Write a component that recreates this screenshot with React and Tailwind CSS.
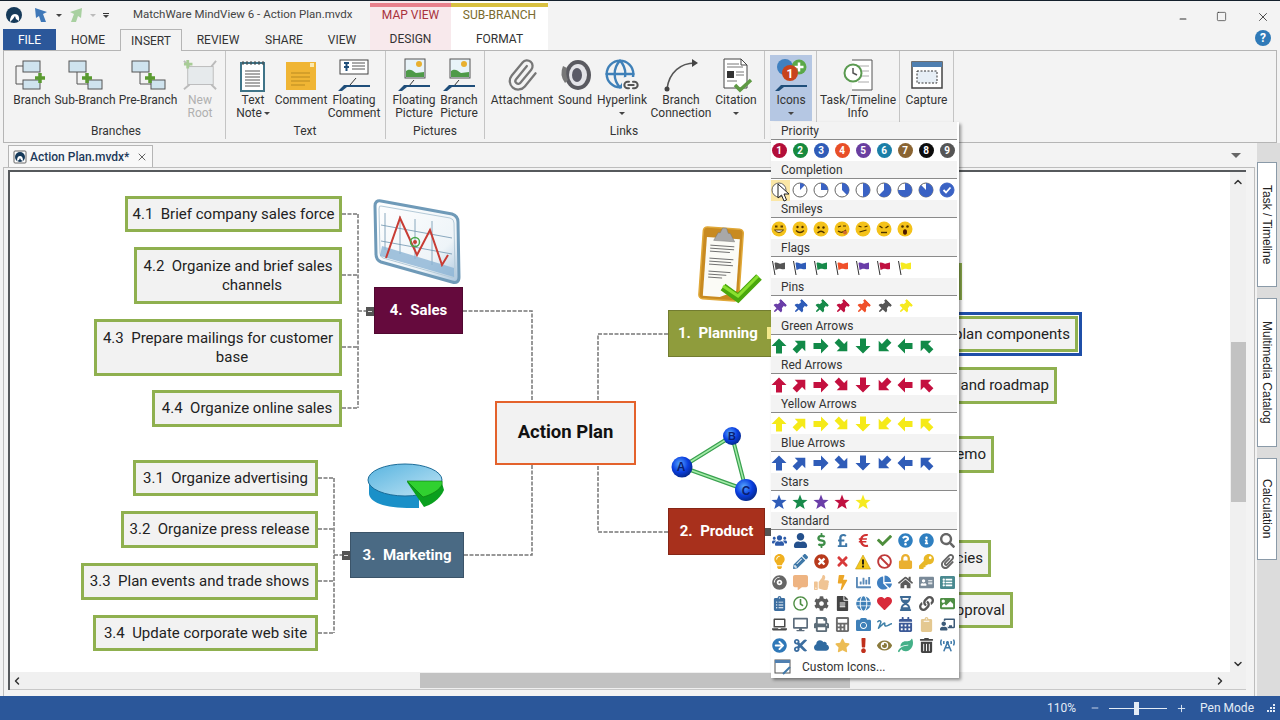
import {
  FaUsers, FaUser, FaDollarSign, FaPoundSign, FaEuroSign, FaCheck, FaQuestionCircle, FaInfoCircle, FaSearch,
  FaLightbulb, FaPencilAlt, FaTimesCircle, FaTimes, FaBan, FaLock, FaKey, FaPaperclip,
  FaCompactDisc, FaCommentAlt, FaThumbsUp, FaBolt, FaChartBar, FaChartPie, FaHome, FaAddressCard, FaListAlt,
  FaClipboardList, FaRegClock, FaCog, FaFileAlt, FaGlobe, FaHeart, FaHourglassHalf, FaLink, FaImage,
  FaLaptop, FaDesktop, FaPrint, FaCalculator, FaCamera, FaSignature, FaCalendarAlt, FaClipboard, FaChalkboardTeacher,
  FaArrowCircleRight, FaCut, FaCloud, FaStar, FaExclamation, FaEye, FaLeaf, FaTrashAlt, FaBroadcastTower, FaThumbtack,
} from "react-icons/fa";
import { ChevronLeft, ChevronRight, ChevronUp, ChevronDown, X, Minus, Plus, Paperclip, Globe, Link2, Square } from "lucide-react";

const Caret = ({ className = "" }) => (
  <span className={`inline-block shrink-0 w-0 h-0 border-l-[3px] border-r-[3px] border-t-[3px] border-l-transparent border-r-transparent border-t-[#444] ${className}`} />
);

// ribbon drawings
const Box = ({ x, y, w, h }) => <rect x={x} y={y} width={w} height={h} fill="#cfe3ee" stroke="#555" strokeWidth="1" />;
const GreenPlus = ({ x, y }) => <path d={`M${x} ${y - 5}v10M${x - 5} ${y}h10`} stroke="#5a9a30" strokeWidth="3.5" />;
const Wedge = () => <path d="M2 33 L8 27 H34 V29 H11 L6 33Z" fill="#1f4e7a" />;

const IconBranch = () => (
  <svg width="36" height="36" viewBox="0 0 36 36"><Box x="9" y="3" w="17" h="11" /><Box x="9" y="22" w="17" h="9" />
    <path d="M9 8H2V26H9" fill="none" stroke="#555" /><GreenPlus x="26" y="20" /></svg>
);
const IconSub = () => (
  <svg width="36" height="36" viewBox="0 0 36 36"><Box x="2" y="3" w="17" h="11" /><Box x="21" y="22" w="14" h="9" />
    <path d="M10 14V26H21" fill="none" stroke="#555" /><GreenPlus x="20" y="20" /></svg>
);
const IconNewRoot = () => (
  <svg width="36" height="36" viewBox="0 0 36 36"><rect x="5" y="8" width="27" height="19" fill="#e6eaec" stroke="#bbb" />
    <path d="M1 2l6 6M35 2l-5 6M1 32l6-5M35 32l-5-5" stroke="#bbb" strokeWidth="2" /><path d="M5 1v9M1 5.500h9" stroke="#a8cc96" strokeWidth="3" /></svg>
);
const IconNote = () => (
  <svg width="36" height="36" viewBox="0 0 36 36"><rect x="6" y="5" width="23" height="28" fill="#fff" stroke="#3f7488" strokeWidth="2" />
    <path d="M8 3v4M12 3v4M16 3v4M20 3v4M24 3v4M28 3v4" stroke="#444" /><path d="M10 13h15M10 16h15M10 19h15M10 22h15M10 25h15M10 28h15" stroke="#555" /></svg>
);
const IconComment = () => (
  <svg width="36" height="36" viewBox="0 0 36 36"><rect x="3" y="4" width="30" height="28" fill="#f0b534" />
    <path d="M8 15h19M8 19h19M8 23h19M8 27h14" stroke="#b98a20" /><rect x="27" y="5" width="4" height="4" fill="#fbe9b0" /></svg>
);
const IconFloatComment = () => (
  <svg width="36" height="36" viewBox="0 0 36 36"><rect x="4" y="2" width="28" height="14" fill="#fff" stroke="#444" />
    <path d="M8 5h5M10.500 5v8M8 9h5" stroke="#1f4e7a" strokeWidth="2" /><path d="M16 5h13M16 8h13M16 11h13" stroke="#555" /><path d="M20 20l-6 7" stroke="#333" /><Wedge /></svg>
);
const IconFloatPic = () => (
  <svg width="36" height="36" viewBox="0 0 36 36"><rect x="9" y="1" width="20" height="19" fill="#e8f3f8" stroke="#555" />
    <circle cx="23" cy="6" r="3" fill="#e8b030" /><path d="M10 19v-6c4-3 7 0 10 2l8-1v5z" fill="#4e9a48" /><path d="M18 22l-5 6" stroke="#333" /><Wedge /></svg>
);
const IconSound = () => (
  <svg width="36" height="36" viewBox="0 0 36 36"><ellipse cx="21" cy="17" rx="13" ry="15" fill="#5a5a60" /><ellipse cx="21" cy="17" rx="9" ry="11" fill="#e4e4e8" />
    <ellipse cx="20" cy="17" rx="5" ry="7" fill="#5a5a66" /><path d="M6 8q-4 9 2 17l3-3q-3-6-1-12z" fill="#777" /></svg>
);
const IconHyper = () => (
  <div className="relative w-9 h-9">
    <Globe size={32} strokeWidth={1.8} className="text-[#3f80b8]" />
    <div className="absolute right-0 bottom-[1px] bg-[#f3f3f3] rounded-sm px-[1px]"><Link2 size={16} strokeWidth={3} className="text-[#555]" /></div>
  </div>
);
const IconConn = () => (
  <svg width="36" height="36" viewBox="0 0 36 36"><path d="M4 31C6 14 18 5 32 5" fill="none" stroke="#555" strokeWidth="1.500" /><circle cx="4" cy="31" r="2.500" fill="#444" /><path d="M29 1l6 4-6 4z" fill="#444" /></svg>
);
const IconCitation = () => (
  <svg width="36" height="36" viewBox="0 0 36 36"><path d="M6 1H23L29 7V30H6Z" fill="#fff" stroke="#444" /><path d="M23 1v6h6" fill="none" stroke="#444" />
    <rect x="9" y="13" width="7" height="7" fill="#333" /><path d="M9 6h12M9 9h16M18 14h8M18 17h8M9 23h10" stroke="#777" /><path d="M17 27l5 5 11-10" fill="none" stroke="#5f9a44" strokeWidth="3.500" /></svg>
);
const IconIcons = () => (
  <svg width="36" height="36" viewBox="0 0 36 36"><circle cx="12" cy="9" r="8" fill="#3f80c0" /><circle cx="26" cy="9" r="7.500" fill="#5aa848" />
    <path d="M26 4.500v9M21.500 9h9" stroke="#fff" strokeWidth="2.500" /><circle cx="17" cy="15" r="8" fill="#c8431c" />
    <text x="17" y="19.500" textAnchor="middle" fontSize="12" fontWeight="700" fill="#fff" fontFamily="Roboto">1</text><Wedge /></svg>
);
const IconTask = () => (
  <svg width="36" height="36" viewBox="0 0 36 36"><path d="M12 2H32V32H12" fill="#fff" stroke="#555" /><path d="M18 8h11M22 13h7M22 18h7M18 24h11" stroke="#aaa" />
    <circle cx="13" cy="15" r="8.500" fill="#fff" stroke="#5a9a50" strokeWidth="2" /><path d="M13 10v5l4 2" fill="none" stroke="#555" strokeWidth="1.500" /></svg>
);
const IconCapture = () => (
  <svg width="36" height="36" viewBox="0 0 36 36"><rect x="3" y="4" width="30" height="26" fill="#fff" stroke="#444" strokeWidth="1.500" /><rect x="3" y="4" width="30" height="5" fill="#4f7fb0" />
    <rect x="8" y="13" width="20" height="12" fill="#e7eff6" stroke="#333" strokeDasharray="2 1.500" /></svg>
);

const ribbonGroups = [
  { label: "Branches", w: "w-[222px]", pl: "pl-[3px]", lp: "", items: [
    { w: "w-[50px]", icon: <IconBranch />, text: "Branch" },
    { w: "w-[56px]", icon: <IconSub />, text: "Sub-Branch", nowrap: true },
    { w: "w-[70px]", icon: <IconSub />, text: "Pre-Branch", nowrap: true },
    { w: "w-[34px]", icon: <IconNewRoot />, text: "New Root", off: true },
  ] },
  { label: "Text", w: "w-[160px]", pl: "pl-[7px]", lp: "pr-[8px]", items: [
    { w: "w-[40px]", icon: <IconNote />, text: "Text", text2: "Note", inlineCaret: true },
    { w: "w-[56px]", icon: <IconComment />, text: "Comment" },
    { w: "w-[50px]", icon: <IconFloatComment />, text: "Floating Comment" },
  ] },
  { label: "Pictures", w: "w-[99px]", pl: "pl-[6px]", lp: "pr-[6px]", items: [
    { w: "w-[44px]", icon: <IconFloatPic />, text: "Floating Picture" },
    { w: "w-[46px]", icon: <IconFloatPic />, text: "Branch Picture" },
  ] },
  { label: "Links", w: "w-[280px]", pl: "pl-[7px]", lp: "pr-[8px]", items: [
    { w: "w-[60px]", icon: <Paperclip size={34} strokeWidth={1.6} className="text-[#777] -rotate-[5deg]" />, text: "Attachment" },
    { w: "w-[46px]", icon: <IconSound />, text: "Sound" },
    { w: "w-[48px]", icon: <IconHyper />, text: "Hyperlink", caret: true },
    { w: "w-[70px]", icon: <IconConn />, text: "Branch Connection" },
    { w: "w-[40px]", icon: <IconCitation />, text: "Citation", caret: true },
  ] },
  { label: "", w: "w-[52px]", pl: "pl-[5px]", lp: "", items: [
    { w: "w-[42px]", icon: <IconIcons />, text: "Icons", caret: true, active: true },
  ] },
  { label: "", w: "w-[83px]", pl: "pl-0", lp: "", items: [
    { w: "w-[82px]", icon: <IconTask />, text: "Task/Timeline Info" },
  ] },
  { label: "", w: "w-[54px]", pl: "pl-0", lp: "", items: [
    { w: "w-[53px]", icon: <IconCapture />, text: "Capture" },
  ] },
];

const RibbonItem = ({ item }) => (
  <div className={`${item.w} h-[66px] pt-[3px] flex flex-col items-center text-center leading-[13px] text-[12px] ${item.off ? "text-[#b0b0b0]" : "text-[#333]"} ${item.active ? "bg-[#b5c7e3]" : ""}`}>
    <div className="h-[36px] w-full flex items-start justify-center shrink-0">{item.icon}</div>
    <div className={item.nowrap ? "whitespace-nowrap" : "whitespace-normal"}>
      {item.text}
      {item.text2 && (
        <>
          <br />
          {item.text2}
          {item.inlineCaret && <Caret className="ml-[2px] mb-[2px]" />}
        </>
      )}
    </div>
    {item.caret && <Caret className="mt-[5px]" />}
  </div>
);

// menu cells
const Cell = ({ children, className = "" }) => <div className={`w-4 h-4 shrink-0 flex items-center justify-center ${className}`}>{children}</div>;

const priorities = [
  ["1", "bg-[#b30f3a]"], ["2", "bg-[#178a3e]"], ["3", "bg-[#2f5cb8]"], ["4", "bg-[#e84f28]"], ["5", "bg-[#693ea0]"],
  ["6", "bg-[#1b7fa8]"], ["7", "bg-[#8a6432]"], ["8", "bg-[#0c0c0c]"], ["9", "bg-[#555555]"],
];

const Pie = ({ frac }) => {
  const a = frac * 2 * Math.PI;
  const ex = 8 + 7 * Math.sin(a);
  const ey = 8 - 7 * Math.cos(a);
  return (
    <svg width="16" height="16" viewBox="0 0 16 16">
      <circle cx="8" cy="8" r="7" fill={frac >= 1 ? "#3a62c4" : "#fff"} stroke={frac >= 1 ? "#3a62c4" : "#666"} />
      {frac > 0 && frac < 1 && <path d={`M8 8V1A7 7 0 ${frac > 0.5 ? 1 : 0} 1 ${ex} ${ey}Z`} fill="#3a62c4" />}
      {frac >= 1 && <path d="M4.500 8l2.500 2.500 4.500-5" fill="none" stroke="#fff" strokeWidth="1.800" />}
    </svg>
  );
};

const Smiley = ({ kind }) => (
  <svg width="16" height="16" viewBox="0 0 16 16">
    <circle cx="8" cy="8" r="7.500" fill="#f4c21a" />
    {kind === 0 && <><path d="M4 5.500h2.500M9.500 5.500h2.500" stroke="#5a3c00" strokeWidth="2" /><path d="M3.500 9q4.500 5 9 0z" fill="#fff" stroke="#5a3c00" /></>}
    {kind === 1 && <><circle cx="5.500" cy="6" r="1.200" fill="#4a3000" /><circle cx="10.500" cy="6" r="1.200" fill="#4a3000" /><path d="M4 9.500q4 4 8 0" fill="none" stroke="#4a3000" strokeWidth="1.200" /></>}
    {kind === 2 && <><circle cx="5.500" cy="6.500" r="1.200" fill="#4a3000" /><circle cx="10.500" cy="6.500" r="1.200" fill="#4a3000" /><path d="M4.500 12q3.500-3.500 7 0" fill="none" stroke="#4a3000" strokeWidth="1.200" /></>}
    {kind === 3 && <><path d="M4 6l3-1M9 5h3" stroke="#4a3000" strokeWidth="1.200" /><path d="M4 10q4 3 8-1" fill="none" stroke="#4a3000" strokeWidth="1.200" /><circle cx="11" cy="11.500" r="2" fill="#d06a30" /></>}
    {kind === 4 && <><path d="M3.500 5l3 1M9.500 6l3-1" stroke="#4a3000" strokeWidth="1.200" /><path d="M4.500 11l7-2" stroke="#4a3000" strokeWidth="1.200" /></>}
    {kind === 5 && <><path d="M3.500 5l3 2M9.500 7l3-2" stroke="#4a3000" strokeWidth="1.400" /><path d="M5 11.500h6" stroke="#4a3000" strokeWidth="1.400" /></>}
    {kind === 6 && <><circle cx="5.500" cy="5.500" r="1.300" fill="#4a3000" /><circle cx="10.500" cy="5.500" r="1.300" fill="#4a3000" /><ellipse cx="8" cy="11" rx="2" ry="2.800" fill="#4a1800" /></>}
  </svg>
);

const Flag = ({ color }) => (
  <svg width="16" height="16" viewBox="0 0 16 16">
    <path d="M1.500 1L4 15" stroke="#333" strokeWidth="1" />
    <path d="M3.500 3C6 1.500 8 4.500 10 3.500L14 2.500V9C11 10 9 8 7 9L4.500 10Z" fill={color} />
  </svg>
);

const arrowAngles = [0, 45, 90, 135, 180, 225, 270, 315];
const Arrow = ({ angle, color }) => (
  <svg width="16" height="16" viewBox="0 0 16 16">
    <path d="M8 0.500L15.500 8H11V15.500H5V8H0.500Z" fill={color} transform={`rotate(${angle} 8 8)`} />
  </svg>
);

const Star = ({ color }) => (
  <svg width="16" height="16" viewBox="0 0 16 16">
    <path d="M8 0.500L10 5.800 15.500 6 11.200 9.500 12.700 15 8 12 3.300 15 4.800 9.500 0.500 6 6 5.800Z" fill={color} />
  </svg>
);

const Warning = () => (
  <svg width="16" height="16" viewBox="0 0 16 16"><path d="M8 1L15.500 15H0.500Z" fill="#f2c81e" stroke="#c79a10" strokeWidth="0.600" /><path d="M8 5.500v5M8 11.500v2" stroke="#111" strokeWidth="1.800" /></svg>
);

const standardIcons = [
  [FaUsers, "text-[#2c5aa8]"], [FaUser, "text-[#24508c]"], [FaDollarSign, "text-[#3e8e48]"], [FaPoundSign, "text-[#3f78a8]"], [FaEuroSign, "text-[#d03030]"], [FaCheck, "text-[#4e8e3c]"], [FaQuestionCircle, "text-[#2f7fc0]"], [FaInfoCircle, "text-[#2f7fc0]"], [FaSearch, "text-[#666]"],
  [FaLightbulb, "text-[#f0b020]"], [FaPencilAlt, "text-[#3f78a8]"], [FaTimesCircle, "text-[#b83a1c]"], [FaTimes, "text-[#d83a3a]"], null, [FaBan, "text-[#c03a3a]"], [FaLock, "text-[#eab030]"], [FaKey, "text-[#e8b828]"], [FaPaperclip, "text-[#666]"],
  [FaCompactDisc, "text-[#666]"], [FaCommentAlt, "text-[#eeb482]"], [FaThumbsUp, "text-[#f0c494]"], [FaBolt, "text-[#eca628]"], [FaChartBar, "text-[#5a8ab8]"], [FaChartPie, "text-[#3f7fc0]"], [FaHome, "text-[#5c5c5c]"], [FaAddressCard, "text-[#7a8a98]"], [FaListAlt, "text-[#4a8a90]"],
  [FaClipboardList, "text-[#3c6ea0]"], [FaRegClock, "text-[#4e8e44]"], [FaCog, "text-[#5c5c5c]"], [FaFileAlt, "text-[#444]"], [FaGlobe, "text-[#3f80b8]"], [FaHeart, "text-[#d82a3a]"], [FaHourglassHalf, "text-[#3e6a94]"], [FaLink, "text-[#555]"], [FaImage, "text-[#4e8e44]"],
  [FaLaptop, "text-[#4a4a4a]"], [FaDesktop, "text-[#5c6c7c]"], [FaPrint, "text-[#5c6c78]"], [FaCalculator, "text-[#6c6c6c]"], [FaCamera, "text-[#3f80b8]"], [FaSignature, "text-[#3f80a8]"], [FaCalendarAlt, "text-[#3c5a98]"], [FaClipboard, "text-[#e4c890]"], [FaChalkboardTeacher, "text-[#3c5a78]"],
  [FaArrowCircleRight, "text-[#2f78b8]"], [FaCut, "text-[#3c6ea0]"], [FaCloud, "text-[#2f6aa0]"], [FaStar, "text-[#ecbc54]"], [FaExclamation, "text-[#c0301c]"], [FaEye, "text-[#8a7a3c]"], [FaLeaf, "text-[#44b088]"], [FaTrashAlt, "text-[#444]"], [FaBroadcastTower, "text-[#3c78a8]"],
];

const Section = ({ title, children }) => (
  <div className="h-[39px]">
    <div className="h-[18px] mr-[2px] pl-[10px] bg-[#f3f3f3] border-b border-[#8a8a8a] text-[12px] leading-[19px] text-[#333]">{title}</div>
    <div className="h-[21px] flex items-center gap-[5px]">{children}</div>
  </div>
);

const IconsMenu = () => (
  <div className="absolute left-[771px] top-[122px] w-[188px] h-[556px] bg-white shadow-[2px_2px_3px_rgba(0,0,0,0.4)] font-['Roboto',sans-serif]">
    <Section title="Priority">
      {priorities.map(([n, bg]) => (
        <Cell key={n}><span className={`w-[15px] h-[15px] rounded-full ${bg} text-white text-[10px] font-bold flex items-center justify-center leading-none`}>{n}</span></Cell>
      ))}
    </Section>
    <Section title="Completion">
      {[0, 1, 2, 3, 4, 5, 6, 7, 8].map((i) => (
        <Cell key={i} className={i === 0 ? "relative" : ""}>
          {i === 0 && <span className="absolute left-0 -top-[2px] w-[19px] h-[21px] bg-[#fbe7a6]" />}
          <span className="relative flex"><Pie frac={i / 8} /></span>
        </Cell>
      ))}
    </Section>
    <Section title="Smileys">
      {[0, 1, 2, 3, 4, 5, 6].map((k) => <Cell key={k}><Smiley kind={k} /></Cell>)}
    </Section>
    <Section title="Flags">
      {["#555555", "#2f5cb8", "#178a4a", "#f0502a", "#6a3ea8", "#c01040", "#f6ea20"].map((c) => <Cell key={c}><Flag color={c} /></Cell>)}
    </Section>
    <Section title="Pins">
      {["text-[#6a3ea8]", "text-[#2f5cb8]", "text-[#178a4a]", "text-[#c01040]", "text-[#f0502a]", "text-[#555]", "text-[#f6ea20]"].map((c) => (
        <Cell key={c}><FaThumbtack size={14} className={`${c} rotate-45`} /></Cell>
      ))}
    </Section>
    {[["Green Arrows", "#128a48"], ["Red Arrows", "#c4103f"], ["Yellow Arrows", "#f5ea18"], ["Blue Arrows", "#2f5cb8"]].map(([title, color]) => (
      <Section key={title} title={title}>
        {arrowAngles.map((a) => <Cell key={a}><Arrow angle={a} color={color} /></Cell>)}
      </Section>
    ))}
    <Section title="Stars">
      {["#2f5cb8", "#178a4a", "#6a3ea8", "#c01040", "#f6ea20"].map((c) => <Cell key={c}><Star color={c} /></Cell>)}
    </Section>
    <div className="h-[18px] mr-[2px] pl-[10px] bg-[#f3f3f3] border-b border-[#8a8a8a] text-[12px] leading-[19px] text-[#333]">Standard</div>
    <div className="grid grid-cols-[repeat(9,16px)] gap-x-[5px] auto-rows-[21px] items-center">
      {standardIcons.map((entry, i) => {
        if (!entry) return <Cell key={i}><Warning /></Cell>;
        const [Ico, color] = entry;
        return <Cell key={i}><Ico size={15} className={color} /></Cell>;
      })}
    </div>
    <div className="h-[22px] flex items-center pl-[3px] text-[12px] text-[#333]">
      <svg width="18" height="18" viewBox="0 0 18 18"><rect x="1" y="2" width="15" height="13" fill="#fff" stroke="#555" /><rect x="1" y="2" width="15" height="3" fill="#4f7fb0" /><path d="M9 16l7-7" stroke="#3f78a8" strokeWidth="2" /></svg>
      <span className="ml-[10px]">Custom Icons...</span>
    </div>
    <svg className="absolute left-[6px] top-[61px]" width="14" height="20" viewBox="0 0 14 20">
      <path d="M1 1V15L4.500 12 7 18 9.500 17 7 11H12Z" fill="#fff" stroke="#222" strokeWidth="1" />
    </svg>
  </div>
);

// map drawings live in one svg that uses page coordinates
const MapDrawing = () => (
  <svg className="absolute left-0 top-0" width="1220" height="500" viewBox="10 172 1220 500">
    <defs>
      <radialGradient id="ball" cx="40%" cy="35%" r="65%"><stop offset="0" stopColor="#58a8ff" /><stop offset="0.6" stopColor="#0a3ee0" /><stop offset="1" stopColor="#062a90" /></radialGradient>
      <linearGradient id="board" x1="0" y1="0" x2="1" y2="1"><stop offset="0" stopColor="#ffffff" /><stop offset="0.7" stopColor="#eef4f8" /><stop offset="1" stopColor="#a8c4dc" /></linearGradient>
      <linearGradient id="pieTop" x1="0" y1="0" x2="1" y2="1"><stop offset="0" stopColor="#58b4e0" /><stop offset="1" stopColor="#c0e4f4" /></linearGradient>
    </defs>
    <g fill="none" stroke="#777" strokeWidth="1.500" strokeDasharray="4 1.500">
      <path d="M463 311H532V401" />
      <path d="M464 555H532V465" />
      <path d="M668 334H598V401" />
      <path d="M668 532H598V465" />
      <path d="M342 214H358M342 275H358M342 347H358M342 408H358M358 214V408M358 311H366" />
      <path d="M318 478H334M318 529H334M318 581H334M318 633H334M334 478V633M334 555H342" />
    </g>
    <g fill="#555">
      <rect x="366" y="307" width="8" height="9" />
      <rect x="342" y="551" width="8" height="9" />
      <rect x="765" y="528" width="6" height="8" />
    </g>
    <path d="M368 311.500h4M344 555.500h4" stroke="#ddd" />

    {/* sales chart */}
    <path d="M381 201L452 214Q458 216 458 222L459 277Q459 284 452 282L381 262Q376 260 376 254L375 206Q375 200 381 201Z" fill="url(#board)" stroke="#6f9ab8" strokeWidth="3" />
    <path d="M381 206L450 218Q454 219 454 223L455 274Q455 279 450 277L383 258Q380 257 380 253L379 209Q379 205 381 206Z" fill="none" stroke="#b4cad8" strokeWidth="1" />
    <path d="M385 213L385 250M400 216V254M415 219V259M432 221V265M381 225L452 238M381 241L452 254" stroke="#6f94ae" strokeWidth="0.800" fill="none" />
    <path d="M380 256L454 277L454 268L382 246Z" fill="#8cb4d4" opacity="0.8" />
    <path d="M386 258L400 218L417 255L430 230L442 265L448 255" fill="none" stroke="#c83c34" strokeWidth="2" />
    <circle cx="415" cy="242" r="4.500" fill="none" stroke="#48a848" strokeWidth="1.500" />
    <circle cx="415" cy="242" r="2" fill="#c83c34" />

    {/* clipboard */}
    <g transform="rotate(4 722 265)">
      <rect x="701" y="228" width="40" height="72" rx="4" fill="#c88a20" stroke="#e0a838" strokeWidth="1.500" />
      <path d="M705 238H738V290L722 297H705Z" fill="#fbfbf6" />
      <path d="M709 246h24M709 249h24M709 252h20M709 259h24M709 262h22M709 265h24M709 272h22M709 275h18M709 278h14" stroke="#666" strokeWidth="0.900" />
      <path d="M712 241L716 233H718L720 228H724L726 233H728L733 241Z" fill="#a8a8a8" stroke="#777" strokeWidth="0.500" />
    </g>
    <path d="M723 287L738 298L759 277" fill="none" stroke="#4aa80c" strokeWidth="8" />
    <path d="M723 286L738 296L758 276" fill="none" stroke="#8ae030" strokeWidth="3" />

    {/* pie */}
    <path d="M369 481V493C369 503 386 509 419 508L419 497L406 481Z" fill="#1a90c8" />
    <ellipse cx="405" cy="480" rx="37" ry="16" fill="url(#pieTop)" stroke="#1c6c98" strokeWidth="1" />
    <path d="M407 482L442 483L444 490C440 500 430 505 424 507Z" fill="#0aa01e" />
    <path d="M407 481H442C444 487 434 494 423 497Z" fill="#30d030" stroke="#0a700a" strokeWidth="0.600" />

    {/* abc triangle */}
    <path d="M682 467L732 436L746 490Z" fill="none" stroke="#3aa050" strokeWidth="4" />
    <path d="M682 467L732 436L746 490Z" fill="none" stroke="#a4eca8" strokeWidth="1.500" />
    <circle cx="682" cy="467" r="10.500" fill="url(#ball)" />
    <circle cx="732" cy="436" r="9" fill="url(#ball)" />
    <circle cx="746" cy="490" r="11" fill="url(#ball)" />
    <g fontFamily="Liberation Sans" fontWeight="700" fill="#0a1e70" textAnchor="middle">
      <text x="681" y="471" fontSize="12">A</text>
      <text x="732" y="440" fontSize="11">B</text>
      <text x="746" y="494.500" fontSize="12">C</text>
    </g>
  </svg>
);

const subNodes = [
  { cls: "left-[115px] top-[24px] w-[217px] h-[36px]", text: "4.1  Brief company sales force" },
  { cls: "left-[124px] top-[75px] w-[208px] h-[57px]", text: "4.2  Organize and brief sales", text2: "channels" },
  { cls: "left-[84px] top-[147px] w-[248px] h-[57px]", text: "4.3  Prepare mailings for customer", text2: "base" },
  { cls: "left-[142px] top-[218px] w-[190px] h-[37px]", text: "4.4  Organize online sales" },
  { cls: "left-[123px] top-[288px] w-[185px] h-[36px]", text: "3.1  Organize advertising" },
  { cls: "left-[111px] top-[339px] w-[197px] h-[37px]", text: "3.2  Organize press release" },
  { cls: "left-[71px] top-[391px] w-[237px] h-[37px]", text: "3.3  Plan events and trade shows" },
  { cls: "left-[83px] top-[443px] w-[225px] h-[36px]", text: "3.4  Update corporate web site" },
];

// these run behind the menu, only the right end shows
const hiddenNodes = [
  { cls: "left-[840px] top-[91px] w-[112px] h-[37px]", text: "" },
  { cls: "left-[840px] top-[195px] w-[207px] h-[37px]", text: "and roadmap" },
  { cls: "left-[840px] top-[264px] w-[144px] h-[37px]", text: "memo" },
  { cls: "left-[840px] top-[368px] w-[141px] h-[37px]", text: "policies" },
  { cls: "left-[840px] top-[420px] w-[163px] h-[36px]", text: "approval" },
];

const mainNodes = [
  { cls: "left-[364px] top-[115px] w-[89px] h-[47px] bg-[#650a3d]", text: "4.  Sales" },
  { cls: "left-[340px] top-[360px] w-[114px] h-[46px] bg-[#4a6a84]", text: "3.  Marketing" },
  { cls: "left-[658px] top-[138px] w-[115px] h-[47px] bg-[#8f9c3c] justify-start pl-[9px]", text: "1.  Planning" },
  { cls: "left-[658px] top-[336px] w-[97px] h-[47px] bg-[#a8301c]", text: "2.  Product" },
];

const MindMap = () => (
  <div className="relative w-[1220px] h-[500px] bg-white overflow-hidden font-['Roboto',sans-serif]">
    <MapDrawing />
    <div className="absolute left-[485px] top-[229px] w-[141px] h-[64px] border-2 border-[#e4622c] bg-[#f2f2f2] flex items-center justify-center text-[18.5px] font-bold text-[#111]">Action Plan</div>
    {mainNodes.map((n) => (
      <div key={n.text} className={`absolute ${n.cls} flex items-center justify-center text-white font-bold text-[15px] whitespace-pre border border-black/20`}>{n.text}</div>
    ))}
    <div className="absolute left-[757px] top-[155px] w-[6px] h-[12px] bg-[#f4e98a]" />
    {subNodes.map((n) => (
      <div key={n.text} className={`absolute ${n.cls} border-[3px] border-[#8fb04f] bg-[#f2f2f2] flex flex-col items-center justify-center pt-px text-center text-[15px] leading-[19.5px] text-[#222] whitespace-pre-wrap`}>
        {n.text}
        {n.text2 && <span className="block pl-[28px]">{n.text2}</span>}
      </div>
    ))}
    {hiddenNodes.map((n) => (
      <div key={n.cls} className={`absolute ${n.cls} border-[3px] border-[#8fb04f] bg-[#f2f2f2] flex items-center justify-end pr-[5px] text-[15px] text-[#222]`}>{n.text}</div>
    ))}
    <div className="absolute left-[840px] top-[140px] w-[232px] h-[44px] border-[3px] border-[#1f4fa8] bg-white p-px">
      <div className="w-full h-full border-[3px] border-[#8fb04f] bg-[#f2f2f2] flex items-center justify-end pr-[5px] text-[15px] text-[#222]">plan components</div>
    </div>
  </div>
);

function App() {
  return (
    <div className="relative w-[1280px] h-[720px] overflow-hidden bg-[#f3f3f3] text-[#333] font-['Roboto',sans-serif] flex flex-col">
      {/* title bar and tabs */}
      <div className="h-[50px] flex shrink-0 border-t border-[#14202c]">
        <div className="w-[370px] shrink-0">
          <div className="h-[28px] flex items-center relative">
            <svg className="ml-[5px] shrink-0" width="18" height="18" viewBox="0 0 18 18"><circle cx="9" cy="9" r="8" fill="#163a5a" /><path d="M5 16q0-8 5-8t4 7l-3-2-1-3-2 3z" fill="#fff" /></svg>
            <svg className="ml-[9px] shrink-0" width="17" height="17" viewBox="0 0 17 17"><path d="M3 1L15 5 11 7 14 15 9 15 7 9 4 11Z" fill="#3f78b8" /></svg>
            <Caret className="ml-[7px] border-t-[#222]" />
            <svg className="ml-[6px] shrink-0" width="17" height="17" viewBox="0 0 17 17"><path d="M14 1L2 5 6 7 3 15 8 15 10 9 13 11Z" fill="#a8d0a0" /></svg>
            <Caret className="ml-[5px] border-t-[#bbb]" />
            <div className="ml-[7px] w-[6px] shrink-0 flex flex-col items-center gap-px"><span className="w-[6px] h-px bg-[#333]" /><Caret className="border-t-[#333]" /></div>
            <span className="ml-[24px] text-[11.5px] text-[#444] whitespace-nowrap">MatchWare MindView 6 - Action Plan.mvdx</span>
          </div>
          <div className="h-[21px] flex text-[12px] leading-[22px] text-center text-[#333]">
            <div className="ml-[3px] w-[53px] bg-[#2b579a] text-white">FILE</div>
            <div className="w-[64px]">HOME</div>
            <div className="w-[62px] h-[22px] bg-[#f3f3f3] border border-b-0 border-[#b5b5b5] relative z-10">INSERT</div>
            <div className="w-[72px]">REVIEW</div>
            <div className="w-[60px]">SHARE</div>
            <div className="w-[56px]">VIEW</div>
          </div>
        </div>
        <div className="w-[81px] shrink-0 bg-[#f8e9ec] pt-[2px] flex flex-col text-center text-[12px]">
          <div className="h-[4px] bg-[#e8808c]" />
          <div className="h-[22px] leading-[16px] text-[#a8323c]">MAP VIEW</div>
          <div className="leading-[22px]">DESIGN</div>
        </div>
        <div className="w-[97px] shrink-0 bg-white pt-[2px] flex flex-col text-center text-[12px]">
          <div className="h-[4px] bg-[#d8c040]" />
          <div className="h-[22px] leading-[16px] text-[#7a6a2c]">SUB-BRANCH</div>
          <div className="leading-[22px]">FORMAT</div>
        </div>
        <div className="flex-1 relative">
          <div className="absolute right-[10px] top-[8px] flex items-center text-[#333]">
            <Minus size={10} strokeWidth={2.5} className="mr-[28px] mt-[5px]" />
            <Square size={11} strokeWidth={1.5} className="mr-[29px]" />
            <X size={14} strokeWidth={1.5} />
          </div>
          <div className="absolute right-[9px] top-[29px] w-4 h-4 rounded-full bg-[#2f7ab8] text-white text-[12px] font-bold flex items-center justify-center">?</div>
        </div>
      </div>

      {/* ribbon */}
      <div className="h-[93px] mx-[3px] border border-[#b5b5b5] flex shrink-0">
        {ribbonGroups.map((g, i) => (
          <div key={i} className={`${g.w} ${g.pl} shrink-0 h-[88px] border-r border-[#c4c4c4] flex flex-col`}>
            <div className="flex mt-[4px]">
              {g.items.map((item) => <RibbonItem key={item.text} item={item} />)}
            </div>
            <div className={`mt-[3px] h-[14px] leading-[14px] text-center text-[12px] text-[#333] ${g.lp}`}>{g.label}</div>
          </div>
        ))}
      </div>

      {/* document area */}
      <div className="flex-1 flex min-h-0">
        <div className="w-[1252px] ml-[3px] shrink-0 flex flex-col">
          <div className="h-[24px] flex items-end shrink-0">
            <div className="ml-[5px] w-[145px] h-[22px] bg-[#f8f8f8] border border-b-0 border-[#b5b5b5] flex items-center pl-[3px]">
              <svg width="17" height="17" viewBox="0 0 17 17"><rect x="2" y="3" width="12" height="12" rx="1" fill="#fff" stroke="#666" /><circle cx="8" cy="9" r="5" fill="#163a5a" /><path d="M5 13q0-5 3-5t3 5l-2-1-1-2-1 2z" fill="#fff" /></svg>
              <span className="ml-[1px] text-[12px] font-medium text-[#1d3a5a] whitespace-nowrap">Action Plan.mvdx*</span>
              <X size={12} strokeWidth={1.5} className="ml-auto mr-[4px] text-[#333]" />
            </div>
            <Caret className="ml-[1078px] mb-[9px] border-l-[5px] border-r-[5px] border-t-[5px] border-t-[#666]" />
          </div>
          <div className="flex-1 border border-b-0 border-[#bdbdbd] pl-[4px] pt-[2px] min-h-0">
            <div className="w-[1238px] h-[520px] border-t-2 border-l-2 border-[#56595c] flex flex-col">
              <div className="flex h-[500px]">
                <MindMap />
                <div className="w-[16px] flex flex-col items-center pt-[4px] pb-[2px] bg-[#f0f0f0]">
                  <ChevronUp size={12} strokeWidth={3} className="text-[#333]" />
                  <div className="mt-[154px] w-[15px] h-[160px] bg-[#c2c2c2]" />
                  <ChevronDown size={12} strokeWidth={3} className="mt-auto text-[#333]" />
                </div>
              </div>
              <div className="h-[18px] flex items-center bg-[#f0f0f0] border-b border-[#c8c8c8]">
                <ChevronLeft size={12} strokeWidth={3} className="ml-[1px] text-[#333]" />
                <div className="ml-[397px] w-[430px] h-[15px] bg-[#c2c2c2]" />
                <ChevronRight size={12} strokeWidth={3} className="ml-auto mr-[20px] text-[#333]" />
              </div>
            </div>
          </div>
        </div>
        <div className="w-[23px] ml-[2px] shrink-0 bg-[#dcdcdc] pt-[19px] text-[12px] text-[#222] font-['Liberation_Sans',sans-serif]">
          <div className="w-[20px] h-[125px] bg-white border border-[#8a9aa8] flex items-center justify-center [writing-mode:vertical-rl]">Task / Timeline</div>
          <div className="mt-[11px] w-[20px] h-[149px] bg-white border border-[#8a9aa8] flex items-center justify-center [writing-mode:vertical-rl]">Multimedia Catalog</div>
          <div className="mt-[11px] w-[20px] h-[102px] bg-white border border-[#8a9aa8] flex items-center justify-center [writing-mode:vertical-rl]">Calculation</div>
        </div>
      </div>

      {/* status bar */}
      <div className="h-[24px] bg-[#2b579a] shrink-0 flex items-center justify-end text-[#e4ecf6] text-[12px]">
        <span>110%</span>
        <Minus size={10} strokeWidth={2} className="ml-[14px]" />
        <div className="relative ml-[9px] w-[58px] h-px bg-[#e4ecf6]">
          <span className="absolute left-[25px] -top-[6px] w-[5px] h-[13px] bg-[#e4ecf6]" />
        </div>
        <Plus size={11} strokeWidth={2} className="ml-[9px]" />
        <span className="ml-[13px]">Pen Mode</span>
        <svg className="ml-[12px] mr-[4px]" width="10" height="10" viewBox="0 0 10 10" fill="#e4ecf6"><rect x="7" y="1" width="2" height="2" /><rect x="4" y="4" width="2" height="2" /><rect x="7" y="4" width="2" height="2" /><rect x="1" y="7" width="2" height="2" /><rect x="4" y="7" width="2" height="2" /><rect x="7" y="7" width="2" height="2" /></svg>
      </div>

      <IconsMenu />
    </div>
  );
}

export default App;
